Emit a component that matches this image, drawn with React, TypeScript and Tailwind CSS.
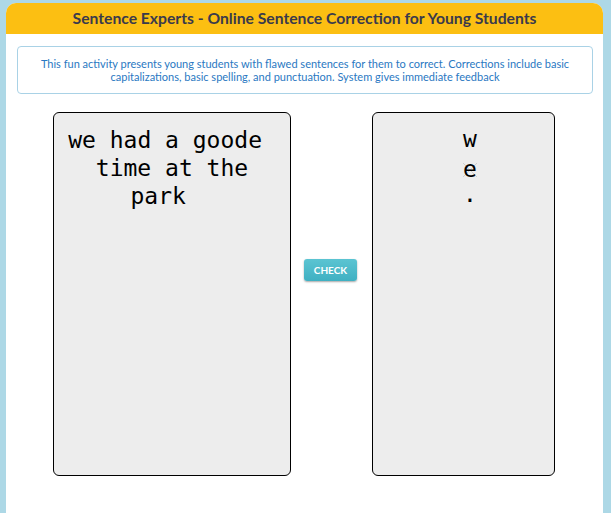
export default function App() {
  return (
    <div className="min-h-[513px] bg-[#ADD8E6] pt-[3px] pl-[6px] pr-[8px]">
      <div className="bg-white rounded-t-[10px] min-h-[510px] overflow-hidden">
        <div className="h-[31px] bg-[#FCBF12] flex items-center justify-center">
          <h1 className="text-[15.7px] font-bold text-[#3a3a4c] font-['Lato',sans-serif]">
            Sentence Experts - Online Sentence Correction for Young Students
          </h1>
        </div>
        <div className="mt-[12px] ml-[11px] mr-[10px] h-[48px] border border-[#a9d2e6] rounded-[4px] flex items-center justify-center px-[10px]">
          <p className="text-[11px] leading-[13px] text-center text-[#2a78c2] font-['Lato',sans-serif]">
            This fun activity presents young students with flawed sentences for them to correct. Corrections include basic capitalizations, basic spelling, and punctuation. System gives immediate feedback
          </p>
        </div>
        <div className="mt-[18px] pl-[47px] flex items-start">
          <div className="w-[238px] h-[364px] bg-[#EDEDED] border border-black rounded-[6px] pt-[13px] font-['DejaVu_Sans_Mono',monospace] text-[23px] leading-[28px] text-black text-center whitespace-pre">
            <div>{"we had a goode "}</div>
            <div>{"time at the"}</div>
            <div>{"park  "}</div>
          </div>
          <button className="ml-[13px] mt-[147px] w-[53px] h-[22px] rounded-[3px] bg-gradient-to-b from-[#5bc4d2] to-[#3fb0c2] shadow-[0_1px_2px_rgba(0,0,0,0.35)] text-white text-[10px] font-bold font-['Lato',sans-serif] flex items-center justify-center">
            CHECK
          </button>
          <div className="ml-[15px] w-[183px] h-[364px] bg-[#EDEDED] border border-black rounded-[6px] pt-[11px] pl-[13px] font-['DejaVu_Sans_Mono',monospace] text-[23px] leading-[30px] text-black flex flex-col items-center">
            <div>w</div>
            <div className="relative">
              <svg className="absolute left-[-1px] top-[8px]" width="16" height="16" viewBox="0 0 16 16">
                <line x1="1" y1="1" x2="15" y2="15" stroke="#cfcfcf" strokeWidth="1" />
                <line x1="15" y1="1" x2="1" y2="15" stroke="#cfcfcf" strokeWidth="1" />
              </svg>
              <span className="relative">e</span>
            </div>
            <div className="-mt-[5px]">.</div>
          </div>
        </div>
      </div>
    </div>
  );
}
